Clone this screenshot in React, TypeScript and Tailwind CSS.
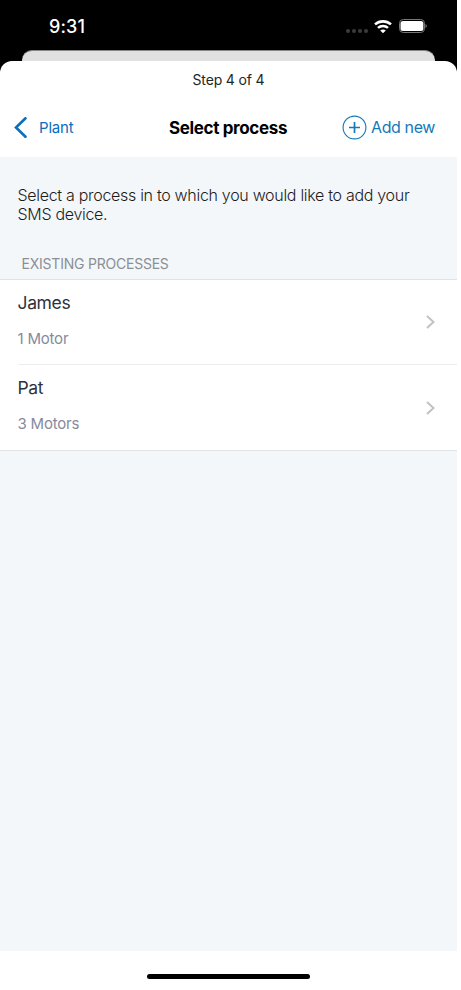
import React from "react";

const processes = [
  { name: "James", motors: "1 Motor" },
  { name: "Pat", motors: "3 Motors" },
];

function StatusBar() {
  return (
    <div className="flex h-[50px] shrink-0 items-start pl-[49px] pr-[29px] text-white">
      <span className="mt-[14px] text-[18px] leading-[25px] font-medium tracking-[0.1px]">9:31</span>
      <div className="mt-[18px] ml-auto flex h-[17px] items-center">
        <div className="mt-[9px] mr-[6px] flex gap-[2px]">
          {[0, 1, 2, 3].map((n) => (
            <span key={n} className="size-[4px] rounded-full bg-[#3b3b3b]" />
          ))}
        </div>
        <svg width="18" height="14" viewBox="0 0 18 14" fill="none" stroke="currentColor" strokeWidth="2.6">
          <path d="M1 4.4C5.5.3 12.5.3 17 4.4" />
          <path d="M4 7.9c2.8-2.5 7.2-2.5 10 0" />
          <path d="M6.2 10.5c1.5-1.5 4.1-1.5 5.6 0L9 13.3z" fill="currentColor" stroke="none" />
        </svg>
        <svg className="ml-[7px]" width="29" height="15" viewBox="0 0 29 15" fill="none">
          <rect x=".5" y=".5" width="25" height="13" rx="3.8" stroke="#777" strokeWidth="1" />
          <rect x="1.5" y="2" width="22.9" height="10" rx="2.5" fill="white" />
          <path d="M26.5 5c1.8.6 1.8 3.4 0 4z" fill="#777" />
        </svg>
      </div>
    </div>
  );
}

export default function App() {
  return (
    <div className="h-[990px] w-[461px] overflow-hidden bg-white font-['Inter',sans-serif]">
      <div className="flex h-full w-[457px] flex-col bg-black">
        <StatusBar />
        <div className="mx-[22px] h-[11px] shrink-0 rounded-t-[10px] border-t border-[#858585] bg-[#e0e0e0]" />
        <main className="flex grow flex-col rounded-t-[12px] bg-white">
          <header className="h-[96px] shrink-0">
            <p className="pt-[9px] text-center text-[14px] leading-5 tracking-[-0.15px] text-[#252525]">Step 4 of 4</p>
            <div className="mt-[22px] grid h-[30px] grid-cols-[1fr_auto_1fr] items-center pl-[14px] pr-[22px]">
              <button className="flex items-center gap-[12px] text-[15px] tracking-[-0.2px] text-[#0a6ebd]">
                <svg width="13" height="21" viewBox="0 0 13 21" fill="none" stroke="currentColor" strokeWidth="2.6">
                  <path d="M11.5 1.3 2 10.5l9.5 9.2" strokeLinecap="round" />
                </svg>
                <span className="mt-[3px]">Plant</span>
              </button>
              <h1 className="ml-[7px] pt-[3px] text-[17px] font-bold tracking-[-0.35px] text-black">Select process</h1>
              <button className="flex items-center justify-end gap-[4px] text-[16px] tracking-[-0.4px] whitespace-nowrap text-[#1479b8]">
                <svg width="25" height="25" viewBox="0 0 25 25" fill="none" stroke="currentColor">
                  <circle cx="12.5" cy="12.5" r="11.4" strokeWidth="1.1" />
                  <path d="M12.5 7v11M7 12.5h11" strokeWidth="1.7" />
                </svg>
                Add new
              </button>
            </div>
          </header>
          <section className="grow bg-[#f3f7fa]">
            <p className="pt-[29px] pl-[17.5px] text-[16px] leading-[19px] font-light tracking-[-0.3px] text-[#1c1c1c]">
              Select a process in to which you would like to add your
              <br />
              SMS device.
            </p>
            <h2 className="mt-[30px] pl-[21.5px] text-[14px] leading-5 font-normal tracking-[-0.22px] text-[#8c8f94]">EXISTING PROCESSES</h2>
            <ul className="mt-[5px] border-y border-[#e1e4e7] bg-white">
              {processes.map((process, i) => (
                <li key={process.name} className="pl-[17.5px]">
                  <div className={`flex h-[85px] items-center justify-between pr-[22px] ${i === 0 ? "border-b border-[#ebedef]" : ""}`}>
                    <div className={i === 0 ? "-mt-[5px]" : "-mt-[6px]"}>
                      <div className="text-[17.5px] leading-6 tracking-[-0.35px] text-[#2e323d]">{process.name}</div>
                      <div className="mt-[14px] text-[15px] leading-5 tracking-[-0.2px] text-[#858a9d]">{process.motors}</div>
                    </div>
                    <svg width="9" height="14" viewBox="0 0 9 14" fill="none" stroke="#c2c2c4" strokeWidth="2">
                      <path d="m1 1 6.5 6L1 13" />
                    </svg>
                  </div>
                </li>
              ))}
            </ul>
          </section>
          <footer className="flex h-[39px] shrink-0 justify-center">
            <div className="mt-[23px] h-[5px] w-[163px] rounded-full bg-black" />
          </footer>
        </main>
      </div>
    </div>
  );
}
